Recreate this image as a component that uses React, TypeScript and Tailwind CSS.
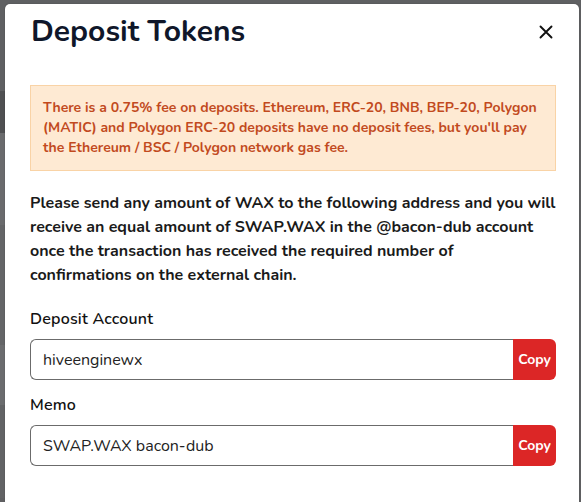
import React from 'react';

const BANDS: { h: string; c: string }[] = [
  { h: 'h-[91px]', c: 'bg-[#5f6062]' },
  { h: 'h-[42px]', c: 'bg-[#4f5052]' },
  { h: 'h-[92px]', c: 'bg-[#6a6b6d]' },
  { h: 'h-[120px]', c: 'bg-[#646567]' },
  { h: 'h-[60px]', c: 'bg-[#6b6c6e]' },
  { h: 'h-[93px]', c: 'bg-[#626365]' },
];

const CopyField = ({ label, value }: { label: string; value: string }) => (
  <div>
    <div className="text-[16px] leading-6 font-semibold tracking-[0.2px] text-[#111]">{label}</div>
    <div className="flex mt-[8px] h-[41px] mr-[1px]">
      <div className="flex-1 flex items-center border border-[#6b6b6b] border-r-0 rounded-l-[6px] px-[12px] text-[16px] text-[#222]">
        {value}
      </div>
      <button className="w-[43px] bg-[#dc2626] text-white text-[14px] font-bold rounded-r-[6px] flex items-center justify-center">
        Copy
      </button>
    </div>
  </div>
);

export default function App() {
  return (
    <div className="h-[502px] overflow-hidden bg-[#5f6062] flex pt-[4px] font-['Nunito','Lato',sans-serif]">
      <div className="w-[5px] -mt-[4px] flex flex-col">
        {BANDS.map((b, i) => (
          <div key={i} className={`${b.h} ${b.c}`} />
        ))}
      </div>
      <div className="w-[574px] bg-white rounded-t-[5px] pl-[25px] pr-[22px] shadow-[0_0_2px_rgba(0,0,0,0.2)]">
        <div className="flex items-center justify-between pt-[10px]">
          <h1 className="text-[30px] leading-9 font-bold text-[#0f172a] pl-[1px]">Deposit Tokens</h1>
          <button className="mr-[4px] text-[#111]">
            <svg width="14" height="14" viewBox="0 0 14 14" fill="none" stroke="currentColor" strokeWidth="1.9" strokeLinecap="round">
              <path d="M1.5 1.5 L12.5 12.5 M12.5 1.5 L1.5 12.5" />
            </svg>
          </button>
        </div>

        <div className="mt-[35px] mr-[1px] bg-[#feead3] border border-[#f9d3a6] px-[12px] py-[12px] text-[14px] leading-5 font-bold text-[#c24a1e]">
          There is a 0.75% fee on deposits. Ethereum, ERC-20, BNB, BEP-20, Polygon (MATIC) and Polygon ERC-20 deposits have
          no deposit fees, but you'll pay the Ethereum / BSC / Polygon network gas fee.
        </div>

        <p className="mt-[20px] mr-[1px] text-[16px] leading-6 font-bold text-[#1a1a1a]">
          Please send any amount of WAX to the following address and you will receive an equal amount of SWAP.WAX in the
          @bacon-dub account once the transaction has received the required number of confirmations on the external chain.
        </p>

        <div className="mt-[20px] flex flex-col gap-[13px]">
          <CopyField label="Deposit Account" value="hiveenginewx" />
          <CopyField label="Memo" value="SWAP.WAX bacon-dub" />
        </div>
      </div>
    </div>
  );
}
